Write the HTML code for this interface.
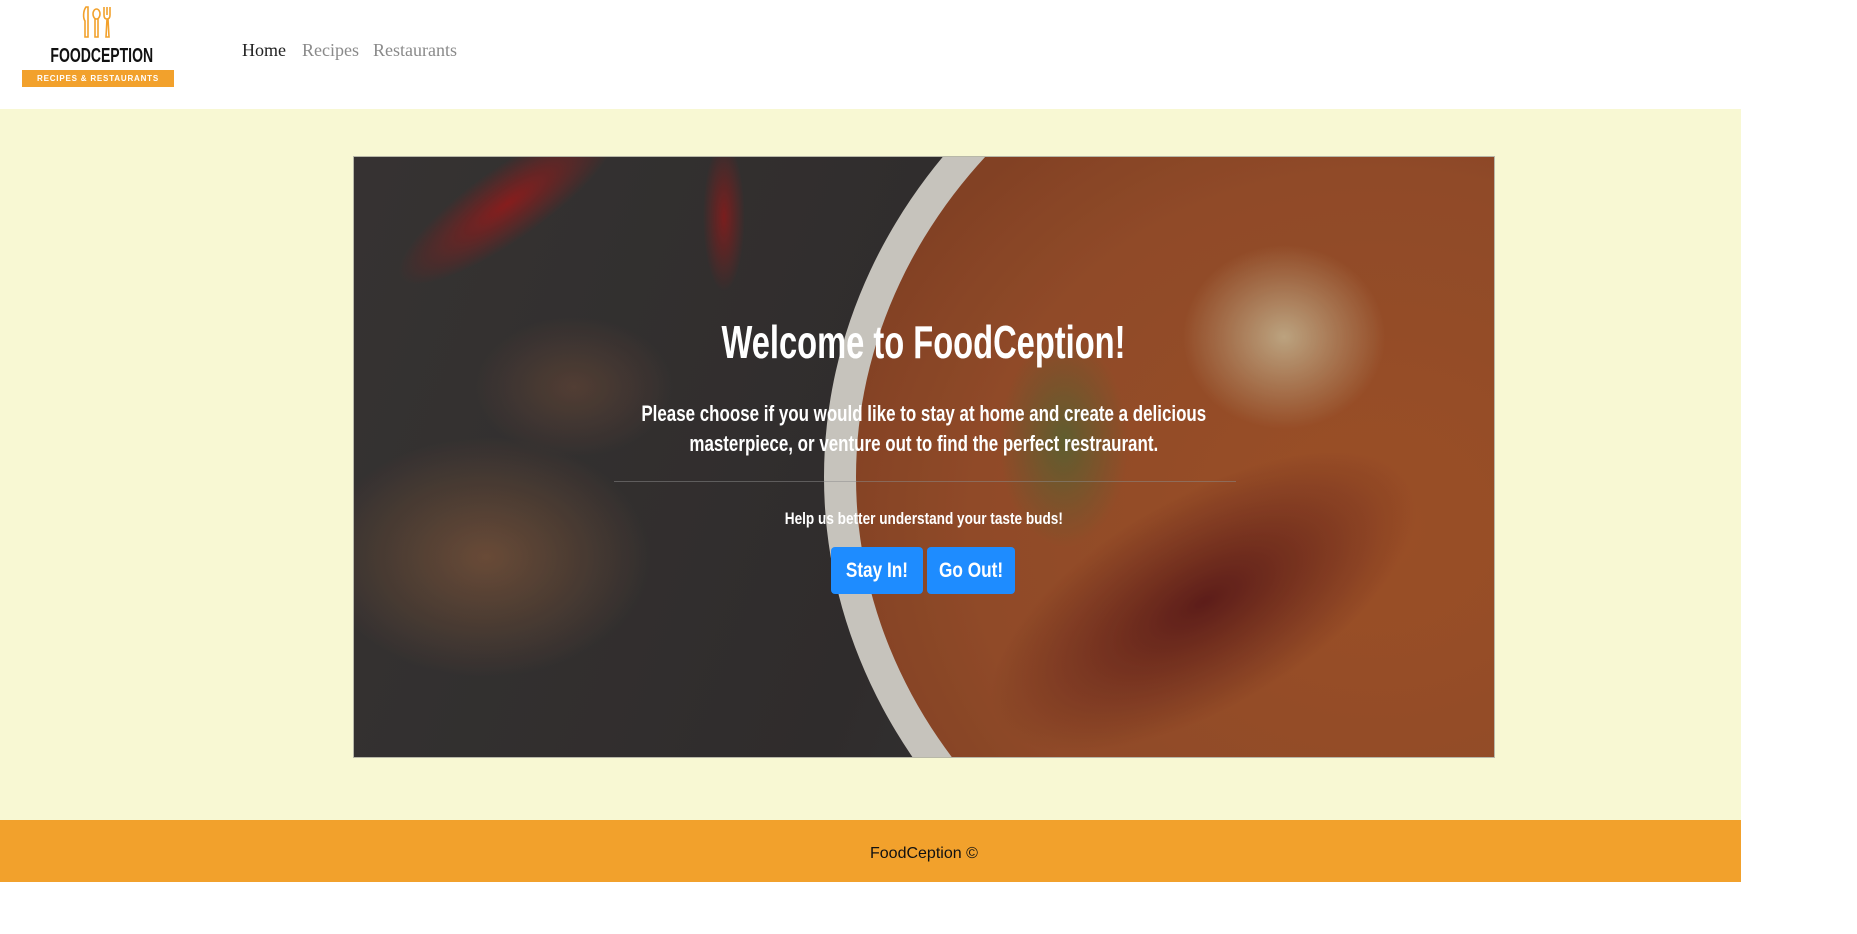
<!DOCTYPE html>
<html><head><meta charset="utf-8">
<style>
*{margin:0;padding:0;box-sizing:border-box}
html,body{width:1857px;height:934px;background:#fff;overflow:hidden;font-family:"Liberation Sans",sans-serif}
.hdr{position:absolute;left:0;top:0;width:1857px;height:109px;background:#fff}
.logo-t{position:absolute;left:30px;top:46px;width:136px;font-weight:bold;font-size:20px;color:#111;text-align:center;line-height:20px;transform:scaleX(.7)}
.band{position:absolute;left:22px;top:70px;width:152px;height:17px;background:#f2a12c;color:#fff;font-size:8px;font-weight:bold;letter-spacing:0.8px;text-align:center;line-height:17px}
.nav{position:absolute;top:40px;font-family:"Liberation Serif",serif;font-size:18px}
.main{position:absolute;left:0;top:109px;width:1741px;height:711px;background:#f8f8d3}
.card{position:absolute;left:353px;top:156px;width:1142px;height:602px;overflow:hidden;border:1px solid #b8b8a8;background:#3b3838}
.card div.l{position:absolute}
.txt{position:absolute;left:0;width:1140px;text-align:center;color:#fff;font-family:"Liberation Sans Narrow","Liberation Sans",sans-serif;font-weight:bold}
.btn{position:absolute;top:390px;height:47px;background:#1e8cff;border-radius:4px;color:#fff;font-family:"Liberation Sans Narrow","Liberation Sans",sans-serif;font-weight:bold;font-size:21px;line-height:47px;text-align:center}
.foot{position:absolute;left:0;top:820px;width:1741px;height:62px;background:#f2a12c;line-height:68px;font-size:16px;color:#111;padding-left:870px}
</style></head><body>
<div class="hdr">
<svg style="position:absolute;left:82px;top:6px" width="32" height="33" viewBox="0 0 32 33" fill="none" stroke="#f2a12c" stroke-width="1.6">
<path d="M4 1 C1 5 1 12 3 15 L3 31 L6 31 L6 1 Z"/>
<ellipse cx="14.5" cy="8" rx="3.5" ry="5"/><path d="M13 13 L13 31 L16 31 L16 13"/>
<path d="M22 1 L22 9 Q22 13 25 13 Q28 13 28 9 L28 1 M25 1 L25 9 M25 13 L24 31 L27 31 L26 13"/>
</svg>
<div class="logo-t">FOODCEPTION</div>
<div class="band">RECIPES &amp; RESTAURANTS</div>
<div class="nav" style="left:242px;color:#222">Home</div>
<div class="nav" style="left:302px;color:#8a8a8a">Recipes</div>
<div class="nav" style="left:373px;color:#8a8a8a">Restaurants</div>
</div>
<div class="main"></div>
<div class="card">
 <div class="l" style="left:0;top:0;width:1142px;height:602px;background:linear-gradient(110deg,#3e3a39 0%,#363333 50%,#444 100%)"></div>
 <div class="l" style="left:20px;top:0;width:260px;height:130px;background:radial-gradient(ellipse 50% 28% at 55% 40%,rgba(170,30,30,.85),rgba(0,0,0,0));transform:rotate(-35deg)"></div>
 <div class="l" style="left:340px;top:0;width:60px;height:150px;background:radial-gradient(ellipse 35% 50% at 50% 40%,rgba(160,30,30,.8),rgba(0,0,0,0))"></div>
 <div class="l" style="left:0;top:250px;width:330px;height:300px;background:radial-gradient(ellipse 50% 40% at 40% 50%,rgba(170,110,70,.55),rgba(0,0,0,0))"></div>
 <div class="l" style="left:120px;top:160px;width:200px;height:140px;background:radial-gradient(ellipse 50% 50% at 50% 50%,rgba(160,100,70,.35),rgba(0,0,0,0))"></div>
 <div class="l" style="left:470px;top:-220px;width:1220px;height:1080px;border-radius:50%;border:32px solid #e2ded7;background:radial-gradient(ellipse at 45% 55%,#b05a2c 0%,#a4552e 45%,#8e4628 70%,#7a3c26 90%,#c9c2b8 100%)"></div>
 <div class="l" style="left:820px;top:80px;width:220px;height:200px;background:radial-gradient(ellipse,rgba(225,210,170,.8),rgba(0,0,0,0) 65%)"></div>
 <div class="l" style="left:590px;top:330px;width:520px;height:230px;background:radial-gradient(ellipse,rgba(90,20,25,.8),rgba(0,0,0,0) 65%);transform:rotate(-30deg)"></div>
 <div class="l" style="left:640px;top:170px;width:140px;height:230px;background:radial-gradient(ellipse,rgba(70,120,60,.6),rgba(0,0,0,0) 65%)"></div>
 <div class="l" style="left:0;top:0;width:1142px;height:602px;background:rgba(0,0,0,.12)"></div>
 <div class="txt" style="top:157px;font-size:46px;line-height:56px"><span style="display:inline-block;transform:scaleX(.71)">Welcome to FoodCeption!</span></div>
 <div class="txt" style="top:242px;font-size:22px;line-height:30px"><span style="display:inline-block;transform:scaleX(.77)">Please choose if you would like to stay at home and create a delicious<br>masterpiece, or venture out to find the perfect restraurant.</span></div>
 <div class="l" style="left:260px;top:324px;width:622px;height:1px;background:rgba(140,140,140,.5)"></div>
 <div class="txt" style="top:351px;font-size:17px;line-height:22px"><span style="display:inline-block;transform:scaleX(.8)">Help us better understand your taste buds!</span></div>
 <div class="btn" style="left:477px;width:92px"><span style="display:inline-block;transform:scaleX(.82)">Stay In!</span></div>
 <div class="btn" style="left:573px;width:88px"><span style="display:inline-block;transform:scaleX(.82)">Go Out!</span></div>
</div>
<div class="foot">FoodCeption ©</div>
</body></html>
